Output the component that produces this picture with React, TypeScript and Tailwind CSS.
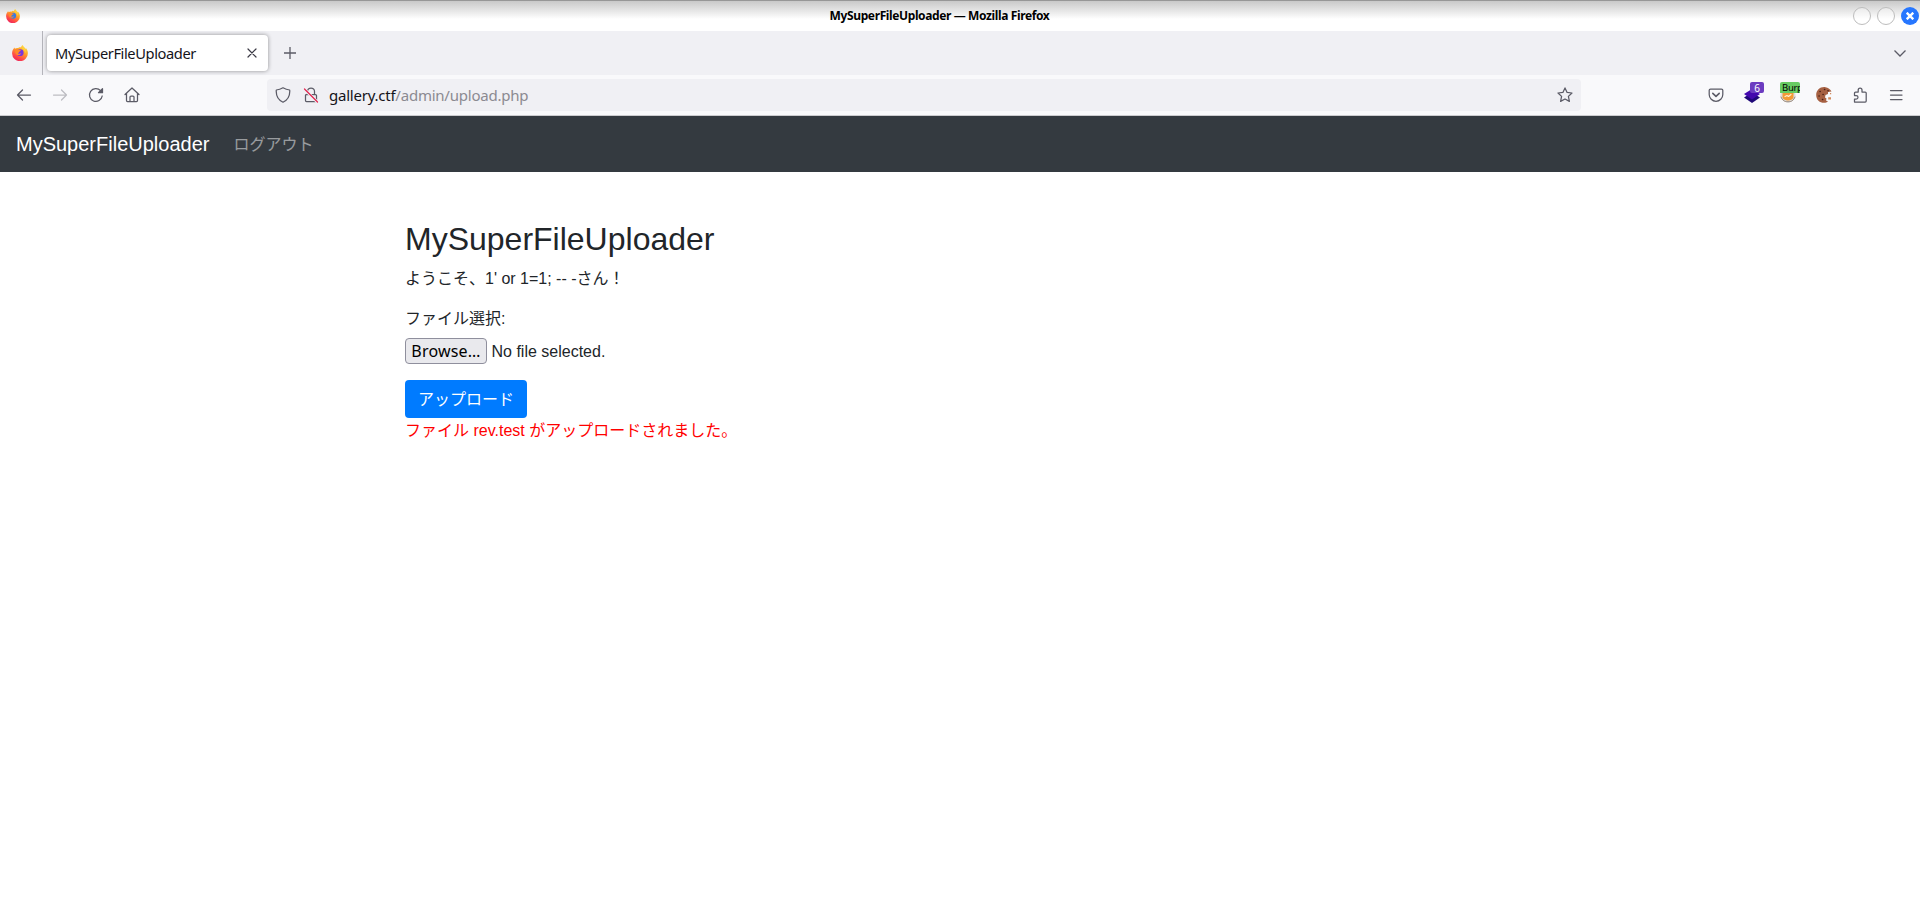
import type { ReactNode } from 'react';

type IconProps = { children: ReactNode; className?: string; size?: number };

function Icon({ children, className = 'text-[#5b5b66]', size = 16 }: IconProps) {
  return (
    <svg
      width={size}
      height={size}
      viewBox="0 0 16 16"
      fill="none"
      stroke="currentColor"
      strokeWidth="1.25"
      strokeLinecap="round"
      strokeLinejoin="round"
      className={`shrink-0 ${className}`}
    >
      {children}
    </svg>
  );
}

function FirefoxLogo({ size, core }: { size: number; core: string }) {
  const id = `fox-${size}`;
  return (
    <svg width={size} height={size} viewBox="0 0 16 16" className="shrink-0">
      <defs>
        <linearGradient id={id} x1="0.8" y1="0" x2="0.25" y2="1">
          <stop offset="0" stopColor="#ffe34d" />
          <stop offset="0.4" stopColor="#ffa126" />
          <stop offset="0.75" stopColor="#ff4848" />
          <stop offset="1" stopColor="#e9215f" />
        </linearGradient>
      </defs>
      <path
        d="M1.6 3.8 2.4 2.4l.5 1.3C4 3 5 2.8 6 3c.8-.3 1.4-.8 2-.9L9 2.6C9.2 1.3 9.8.5 10.8 0c.3 1.7 2 2.4 2.6 3.8l.7-.5c1.1 1.3 1.8 3.1 1.8 4.9A7.9 7.9 0 0 1 .1 8.4C.1 6.5.6 5 1.6 3.8Z"
        fill={`url(#${id})`}
      />
      <circle cx="8.2" cy="7.7" r="3.4" fill={core} />
      <path d="M3 4.4c1.4-.7 3-.5 4.200.6h1.500c.3.9-.5 1.300-1.600 1.700-.2 1-.6 1.100-1.200 1.500.7 1 2.400.5 3.300.1-.8 1.900-3.200 2.500-5 .9C3.200 8.200 2.800 6 3 4.400Z" fill="#ff8a2a" />
      <path d="M9.500 3.200c2.500.7 4 3 3.500 5.400 1.500-3 .3-5.200-1.700-6.700Z" fill="#ffd33d" />
    </svg>
  );
}

function TitleBar() {
  return (
    <div className="flex h-[31px] items-center border-t border-[#979797] bg-gradient-to-b from-[#c9c9c9] via-white via-60% to-white">
      <div className="mb-px ml-1.5">
        <FirefoxLogo size={14} core="#3b7be0" />
      </div>
      <div className="flex-1 pr-[16px] pl-[22px] text-center text-[12px] leading-none font-bold tracking-[-0.38px] whitespace-nowrap text-black">
        MySuperFileUploader — Mozilla Firefox
      </div>
      <div className="mr-px mb-px flex gap-1.5">
        <span className="size-[18px] rounded-full border border-[#bdbdbd] bg-white/40" />
        <span className="size-[18px] rounded-full border border-[#bdbdbd] bg-white/40" />
        <span className="flex size-[18px] items-center justify-center rounded-full bg-[#2777ff] text-white">
          <svg width="8" height="8" viewBox="0 0 8 8" stroke="currentColor" strokeWidth="2.4">
            <path d="m.7.7 6.600 6.600M7.300.7.7 7.300" />
          </svg>
        </span>
      </div>
    </div>
  );
}

function TabBar() {
  return (
    <div className="flex h-11 items-center bg-[#f0f0f4]">
      <div className="flex h-full w-[43px] items-center border-r border-[#b4b4ba] pl-3">
        <FirefoxLogo size={16} core="#7a35dc" />
      </div>
      <div className="ml-1 flex h-9 w-[221px] items-center justify-between rounded bg-white pr-[11px] pl-2 shadow-[0_0_4px_rgba(0,0,0,0.4)]">
        <span className="text-[14.67px] tracking-[-0.4px] text-[#15141a]">MySuperFileUploader</span>
        <svg width="10" height="10" viewBox="0 0 10 10" stroke="#3a3944" strokeWidth="1.2" strokeLinecap="round">
          <path d="m1 1 8 8M9 1 1 9" />
        </svg>
      </div>
      <svg width="12" height="12" viewBox="0 0 12 12" stroke="#5b5b66" strokeWidth="1.3" className="ml-[15.5px]">
        <path d="M6 0v12M0 6h12" />
      </svg>
      <svg width="12" height="7" viewBox="0 0 12 7" fill="none" stroke="#5b5b66" strokeWidth="1.3" className="mr-3.5 ml-auto">
        <path d="m.5.5 5.500 5.500L11.500.5" />
      </svg>
    </div>
  );
}

function NavBar() {
  return (
    <div className="flex h-[41px] items-center border-b border-[#cccccf] bg-[#f9f9fb]">
      <div className="flex w-[267px] gap-5 pl-4">
        <Icon>
          <path d="M1.500 8h13M6.500 3 1.500 8l5 5" />
        </Icon>
        <Icon className="text-[#bdbdc2]">
          <path d="M1.500 8h13M9.500 3l5 5-5 5" />
        </Icon>
        <Icon>
          <path d="M14.200 9A6.400 6.400 0 1 1 12.600 3.700" />
          <path d="M14.500 1.700v4h-4Z" fill="currentColor" />
        </Icon>
        <Icon className="-ml-[0.5px] text-[#5b5b66]">
          <path d="M1 7.500 8 1l7 6.500M2.500 6.500v7c0 .6.4 1 1 1h9c.6 0 1-.4 1-1v-7M6 14.200V10c0-.6.4-1 1-1h2c.6 0 1 .4 1 1v4.200" />
        </Icon>
      </div>
      <div className="flex h-8 w-[1314px] items-center rounded bg-[#f0f0f4] px-2">
        <Icon>
          <path d="M8 .8c2.200 1.300 4.300 2 6.700 2.200.4 4.900-1.300 9.600-6.700 12.200C2.600 12.600.9 7.900 1.300 3 3.700 2.800 5.800 2.100 8 .8Z" />
        </Icon>
        <Icon className="ml-3 text-[#5b5b66]">
          <path d="M3.500 7.500h9c.6 0 1 .4 1 1v5c0 .6-.4 1-1 1h-9c-.6 0-1-.4-1-1v-5c0-.6.4-1 1-1ZM4.500 7.300V4.500a3.500 3.500 0 0 1 7 0v2.800" />
          <path d="m1.500 2.200 13 13" stroke="#f0f0f4" strokeWidth="3" />
          <path d="m1.500 2 13 13" stroke="#e22850" />
        </Icon>
        <span className="ml-2.5 text-[15px] tracking-[-0.23px] text-[#15141a]">
          gallery.ctf<span className="text-[#8b8a91]">/admin/upload.php</span>
        </span>
        <Icon className="ml-auto text-[#5b5b66]">
          <path d="m8 .9 2.100 4.500 4.900.6-3.600 3.400 1 5L8 12l-4.400 2.400 1-5L1 6l4.900-.6Z" />
        </Icon>
      </div>
      <div className="flex items-center gap-5 pl-[127px]">
        <Icon>
          <path d="M2.500 2h11c.8 0 1.300.5 1.300 1.200V7.500a6.800 6.800 0 0 1-13.600 0V3.200C1.200 2.500 1.700 2 2.500 2Z" />
          <path d="m4.800 6.300 3.200 3 3.200-3" strokeWidth="1.600" />
        </Icon>
        <div className="relative">
          <Icon>
            <path d="m0 10.500 8-5 8 5-8 5.500Z" fill="#1f0878" stroke="none" />
            <path d="m0 7 8-5 8 5-8 5.500Z" fill="#4308ae" stroke="none" />
          </Icon>
          <span className="absolute -top-[5px] left-1.5 flex h-[11px] w-3.5 items-center justify-center rounded-[2px] bg-[#6c3cc0] text-[10px] leading-none text-white">6</span>
        </div>
        <div className="relative">
          <Icon>
            <circle cx="8" cy="8" r="7.600" fill="#dedede" stroke="none" />
            <path d="M2.500 6h11v4c0 2-3 3.500-5.500 3.500S2.500 12 2.500 10Z" fill="#f29a35" stroke="none" />
            <path d="m5 9.500 2-1 1.500 1L11 7.500" stroke="#fff0d0" strokeWidth="1.200" />
            <path d="M1 10c1.500 3.500 3.500 4.800 7 4.800s5.500-1.300 7-4.800" stroke="#8f7c6c" strokeWidth="0.900" />
          </Icon>
          {/* the label is wider than the badge, so its last letter is clipped */}
          <span className="absolute -top-[5px] left-0 h-[11px] w-5 overflow-hidden rounded-t-[2px] bg-[#67cb62] pl-0.5 text-[9.5px] leading-[11px] tracking-[-0.3px] text-black">Burp</span>
        </div>
        <Icon>
          <path d="M9.500.2C4.500-.6.2 3 .2 8s3.600 7.800 7.800 7.800c1.500 0 3-.4 4-1.300l-2-1 .5-2-1.500-1 .5-2.500 2.500-1V5l3.500-.5C14.500 2.500 12 .6 9.500.2Z" fill="#a66042" stroke="none" />
          <path d="M12.200 10.200h2.800v2.200h-2.800ZM14 6h1.200v1.200H14Z" fill="#d08a5e" stroke="none" />
          <path d="M4 4.500h.2M8.500 2.500h.2M12 3.800h.1M3 9h.2M7 7.500h.2M6.500 12.500h.2" stroke="#4c2318" strokeWidth="1.500" />
        </Icon>
        <Icon>
          <path d="M2.500 15h10.700c.6 0 1-.4 1-1V6c0-.6-.4-1-1-1H10V3a1.900 1.900 0 0 0-3.800 0v2H3.500c-.6 0-1 .4-1 1v2.500h1.700a1.800 1.800 0 0 1 0 3.600H2.500Z" />
        </Icon>
        <Icon>
          <path d="M2.500 3.500h11.500M2.500 8h11.500M2.500 12.500h11.500" />
        </Icon>
      </div>
    </div>
  );
}

function UploadPage() {
  return (
    <div className="font-['Liberation_Sans','Noto_Sans_CJK_JP',sans-serif] text-base text-[#212529]">
      <nav className="flex h-14 items-center bg-[#343a40] px-4">
        <a className="mr-6 text-xl text-white">MySuperFileUploader</a>
        <a className="pt-0.5 text-white/50">ログアウト</a>
      </nav>
      <main className="mx-auto mt-12 w-[1140px] px-[15px]">
        <h2 className="mb-[9px] text-[32px] leading-[1.2] font-medium">MySuperFileUploader</h2>
        <p className="mb-4">ようこそ、1' or 1=1; -- -さん！</p>
        <label className="mb-[7px] block">ファイル選択:</label>
        <div className="mb-4 flex h-[26px] items-center gap-[4.5px]">
          <button className="flex h-[26px] w-[82px] items-center justify-center rounded border border-[#8f8f9d] bg-[#e9e9ed] font-['Noto_Sans',sans-serif] text-base leading-none tracking-[0.2px] whitespace-nowrap text-black">
            Browse…
          </button>
          <span className="pt-0.5">No file selected.</span>
        </div>
        <button className="block h-[38px] w-[122px] rounded bg-[#007bff] pt-0.5 text-white">アップロード</button>
        <p className="pt-px text-[#ff0000]">ファイル rev.test がアップロードされました。</p>
      </main>
    </div>
  );
}

export default function App() {
  return (
    <div className="min-h-screen bg-white font-['Noto_Sans',sans-serif]">
      <TitleBar />
      <TabBar />
      <NavBar />
      <UploadPage />
    </div>
  );
}
